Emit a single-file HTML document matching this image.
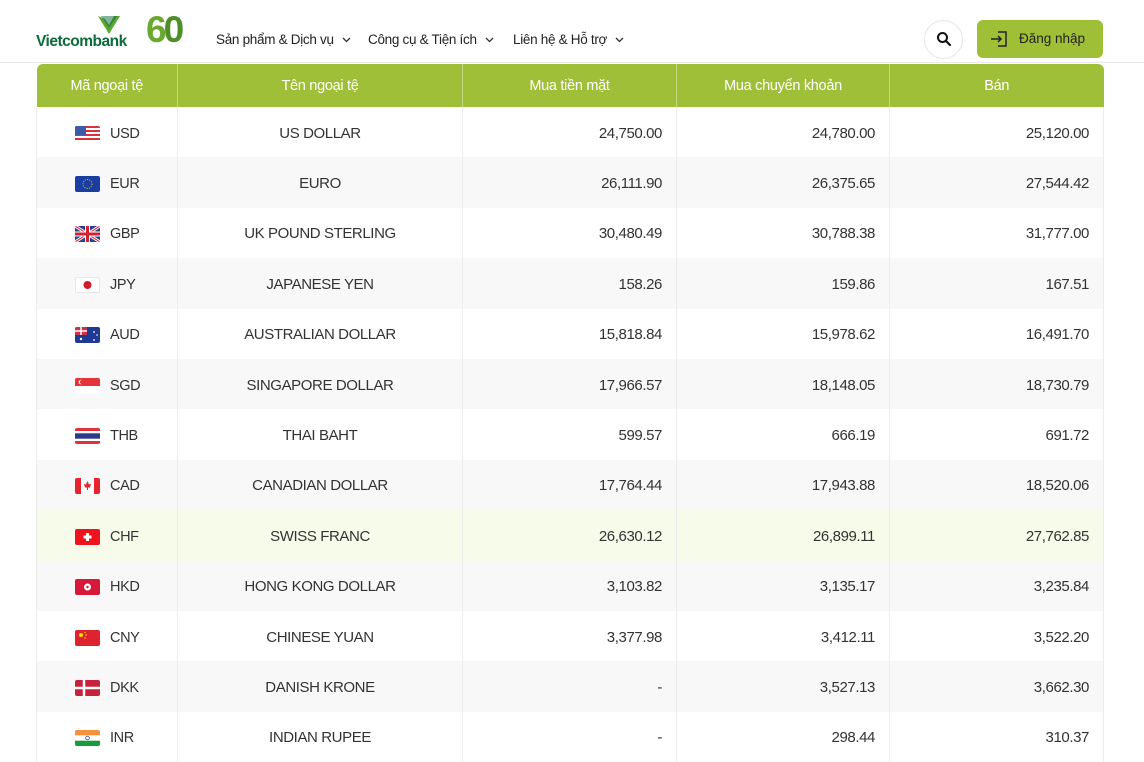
<!DOCTYPE html>
<html><head><meta charset="utf-8"><style>
*{margin:0;padding:0;box-sizing:border-box}
body{width:1144px;height:750px;overflow:hidden;background:#fff;font-family:"Liberation Sans",sans-serif;color:#333;position:relative}
.hdr{position:absolute;left:0;top:0;width:1144px;height:63px;border-bottom:1px solid #e8e8e8;background:#fff}
.logo{position:absolute;left:36px;top:33px;font-weight:bold;font-size:15.5px;color:#0b6b3a;letter-spacing:-0.5px}
.nav{position:absolute;top:32px;font-size:13.5px;color:#222;letter-spacing:-0.3px}
.nav svg{margin-left:8px;vertical-align:middle}
.search{position:absolute;left:924px;top:20px;width:39px;height:39px;border:1px solid #e6e6e6;border-radius:50%}
.login{position:absolute;left:977px;top:20px;width:126px;height:38px;background:#9fbf37;border-radius:6px;font-size:13.5px;color:#222}
table{position:absolute;left:36px;top:64px;width:1067px;border-collapse:collapse;table-layout:fixed}
th{background:#a0bf38;color:#fff;font-weight:normal;font-size:14.5px;height:43px;border-left:1px solid #c4d97f;letter-spacing:-0.3px}
th:first-child{border-left:none;border-top-left-radius:6px}
th:last-child{border-top-right-radius:6px}
td{height:50.4px;font-size:15px;border-left:1px solid #ececec;color:#333;letter-spacing:-0.4px;padding-top:2px}
td:last-child{border-right:1px solid #ececec}
tr:nth-child(odd) td{background:#f8f8f8}
tr.hl td{background:#f6fbea!important}
.c1{padding-left:38px}
.c1 svg{vertical-align:middle;margin-right:10px;border-radius:2px}
.c1 b{font-weight:normal;vertical-align:middle;font-size:14.5px}
.c2{text-align:center}
.n{text-align:right;padding-right:14px}
</style></head><body>
<div class="hdr">
<svg style="position:absolute;left:97px;top:15px" width="24" height="20" viewBox="0 0 24 20"><path d="M1 1 L12 19 L23 1 L17 1 L12 10 L8 4 Z" fill="#5aa832"/><path d="M4 1 H20 L12 13Z" fill="#0b6b3a" opacity=".5"/></svg>
<div class="logo">Vietcombank</div>
<div style="position:absolute;left:146px;top:9px;font-size:37px;font-weight:bold;color:#6aa82f;letter-spacing:-3px">6<span style="color:#4f8f28">0</span></div>
<div class="nav" style="left:216px">Sản phẩm &amp; Dịch vụ<svg width="9" height="6" viewBox="0 0 9 6"><path d="M1 1L4.5 4.5L8 1" fill="none" stroke="#333" stroke-width="1.3"/></svg></div>
<div class="nav" style="left:368px">Công cụ &amp; Tiện ích<svg width="9" height="6" viewBox="0 0 9 6"><path d="M1 1L4.5 4.5L8 1" fill="none" stroke="#333" stroke-width="1.3"/></svg></div>
<div class="nav" style="left:513px">Liên hệ &amp; Hỗ trợ<svg width="9" height="6" viewBox="0 0 9 6"><path d="M1 1L4.5 4.5L8 1" fill="none" stroke="#333" stroke-width="1.3"/></svg></div>
<div class="search"><svg style="position:absolute;left:11px;top:10px" width="17" height="17" viewBox="0 0 17 17"><circle cx="6.5" cy="6.5" r="4.5" fill="none" stroke="#111" stroke-width="2"/><path d="M10 10 L14 14" stroke="#111" stroke-width="2.2" stroke-linecap="round"/></svg></div>
<div class="login"><svg style="position:absolute;left:12px;top:10px" width="20" height="18" viewBox="0 0 20 18"><path d="M9 2 H17 V16 H9" fill="none" stroke="#222" stroke-width="1.5"/><path d="M2 9 H12 M9 6 L12 9 L9 12" fill="none" stroke="#222" stroke-width="1.5"/></svg><span style="position:absolute;left:42px;top:11px">Đăng nhập</span></div>
</div>
<table>
<colgroup><col style="width:141px"><col style="width:285px"><col style="width:214px"><col style="width:213px"><col style="width:214px"></colgroup>
<tr><th>Mã ngoại tệ</th><th>Tên ngoại tệ</th><th>Mua tiền mặt</th><th>Mua chuyển khoản</th><th>Bán</th></tr>
<tr><td class="c1"><svg width="25" height="16" viewBox="0 0 25 16"><rect width="25" height="16" fill="#fff"/><g fill="#d8333d"><rect y="0" width="25" height="2"/><rect y="4" width="25" height="2"/><rect y="8" width="25" height="2"/><rect y="12" width="25" height="2"/></g><rect width="11" height="9" fill="#3d5aa8"/></svg><b>USD</b></td><td class="c2">US DOLLAR</td><td class="n">24,750.00</td><td class="n">24,780.00</td><td class="n">25,120.00</td></tr>
<tr><td class="c1"><svg width="25" height="16" viewBox="0 0 25 16"><rect width="25" height="16" fill="#1a3ea0"/><circle cx="12.5" cy="8" r="4.5" fill="none" stroke="#e8c400" stroke-dasharray="1 1.3"/></svg><b>EUR</b></td><td class="c2">EURO</td><td class="n">26,111.90</td><td class="n">26,375.65</td><td class="n">27,544.42</td></tr>
<tr><td class="c1"><svg width="25" height="16" viewBox="0 0 25 16"><rect width="25" height="16" fill="#2a3f8f"/><path d="M0 0L25 16M25 0L0 16" stroke="#fff" stroke-width="3"/><path d="M0 0L25 16M25 0L0 16" stroke="#d3212f" stroke-width="1"/><path d="M12.5 0V16M0 8H25" stroke="#fff" stroke-width="5"/><path d="M12.5 0V16M0 8H25" stroke="#d3212f" stroke-width="3"/></svg><b>GBP</b></td><td class="c2">UK POUND STERLING</td><td class="n">30,480.49</td><td class="n">30,788.38</td><td class="n">31,777.00</td></tr>
<tr><td class="c1"><svg width="25" height="16" viewBox="0 0 25 16"><rect x=".5" y=".5" width="24" height="15" fill="#fff" stroke="#e6e6e6"/><circle cx="12.5" cy="8" r="4" fill="#d01c2a"/></svg><b>JPY</b></td><td class="c2">JAPANESE YEN</td><td class="n">158.26</td><td class="n">159.86</td><td class="n">167.51</td></tr>
<tr><td class="c1"><svg width="25" height="16" viewBox="0 0 25 16"><rect width="25" height="16" fill="#1f3a93"/><rect width="12" height="8" fill="#c8324a"/><path d="M0 4H12M6 0V8" stroke="#fff" stroke-width="1.5"/><circle cx="6" cy="12" r="1.2" fill="#fff"/><circle cx="19" cy="5" r=".9" fill="#fff"/><circle cx="19" cy="13" r=".9" fill="#fff"/><circle cx="22" cy="8" r=".8" fill="#fff"/></svg><b>AUD</b></td><td class="c2">AUSTRALIAN DOLLAR</td><td class="n">15,818.84</td><td class="n">15,978.62</td><td class="n">16,491.70</td></tr>
<tr><td class="c1"><svg width="25" height="16" viewBox="0 0 25 16"><rect width="25" height="16" fill="#fff"/><rect width="25" height="8" fill="#e5333c"/><circle cx="6" cy="4" r="2.3" fill="#fff"/><circle cx="7" cy="4" r="2.1" fill="#e5333c"/></svg><b>SGD</b></td><td class="c2">SINGAPORE DOLLAR</td><td class="n">17,966.57</td><td class="n">18,148.05</td><td class="n">18,730.79</td></tr>
<tr><td class="c1"><svg width="25" height="16" viewBox="0 0 25 16"><rect width="25" height="16" fill="#e0323c"/><rect y="3" width="25" height="10" fill="#fff"/><rect y="5.3" width="25" height="5.4" fill="#2d3a8c"/></svg><b>THB</b></td><td class="c2">THAI BAHT</td><td class="n">599.57</td><td class="n">666.19</td><td class="n">691.72</td></tr>
<tr><td class="c1"><svg width="25" height="16" viewBox="0 0 25 16"><rect width="25" height="16" fill="#fff"/><rect width="6" height="16" fill="#e8232c"/><rect x="19" width="6" height="16" fill="#e8232c"/><path d="M12.5 3L14 6.5L16 6L15 9.5L12.5 9.5L10 9.5L9 6L11 6.5Z M12 9.5H13V12H12Z" fill="#e8232c"/></svg><b>CAD</b></td><td class="c2">CANADIAN DOLLAR</td><td class="n">17,764.44</td><td class="n">17,943.88</td><td class="n">18,520.06</td></tr>
<tr class="hl"><td class="c1"><svg width="25" height="16" viewBox="0 0 25 16"><rect width="25" height="16" fill="#f0131e"/><path d="M11 4H14V6.5H16.5V9.5H14V12H11V9.5H8.5V6.5H11Z" fill="#fff"/></svg><b>CHF</b></td><td class="c2">SWISS FRANC</td><td class="n">26,630.12</td><td class="n">26,899.11</td><td class="n">27,762.85</td></tr>
<tr><td class="c1"><svg width="25" height="16" viewBox="0 0 25 16"><rect width="25" height="16" fill="#d8183a"/><circle cx="12.5" cy="8" r="3.5" fill="#fff"/><circle cx="12.5" cy="8" r="1.2" fill="#d8183a"/></svg><b>HKD</b></td><td class="c2">HONG KONG DOLLAR</td><td class="n">3,103.82</td><td class="n">3,135.17</td><td class="n">3,235.84</td></tr>
<tr><td class="c1"><svg width="25" height="16" viewBox="0 0 25 16"><rect width="25" height="16" fill="#de2330"/><circle cx="6" cy="5" r="2" fill="#ffde00"/><circle cx="10" cy="2.5" r=".7" fill="#ffde00"/><circle cx="11" cy="5" r=".7" fill="#ffde00"/><circle cx="10" cy="8" r=".7" fill="#ffde00"/></svg><b>CNY</b></td><td class="c2">CHINESE YUAN</td><td class="n">3,377.98</td><td class="n">3,412.11</td><td class="n">3,522.20</td></tr>
<tr><td class="c1"><svg width="25" height="16" viewBox="0 0 25 16"><rect width="25" height="16" fill="#c8213c"/><path d="M0 8H25M9 0V16" stroke="#fff" stroke-width="2.5"/></svg><b>DKK</b></td><td class="c2">DANISH KRONE</td><td class="n">-</td><td class="n">3,527.13</td><td class="n">3,662.30</td></tr>
<tr><td class="c1"><svg width="25" height="16" viewBox="0 0 25 16"><rect width="25" height="16" fill="#fff"/><rect width="25" height="5.3" fill="#f7923a"/><rect y="10.7" width="25" height="5.3" fill="#189b3e"/><circle cx="12.5" cy="8" r="1.8" fill="none" stroke="#1a2d8a" stroke-width=".7"/></svg><b>INR</b></td><td class="c2">INDIAN RUPEE</td><td class="n">-</td><td class="n">298.44</td><td class="n">310.37</td></tr>
</table>
</body></html>
